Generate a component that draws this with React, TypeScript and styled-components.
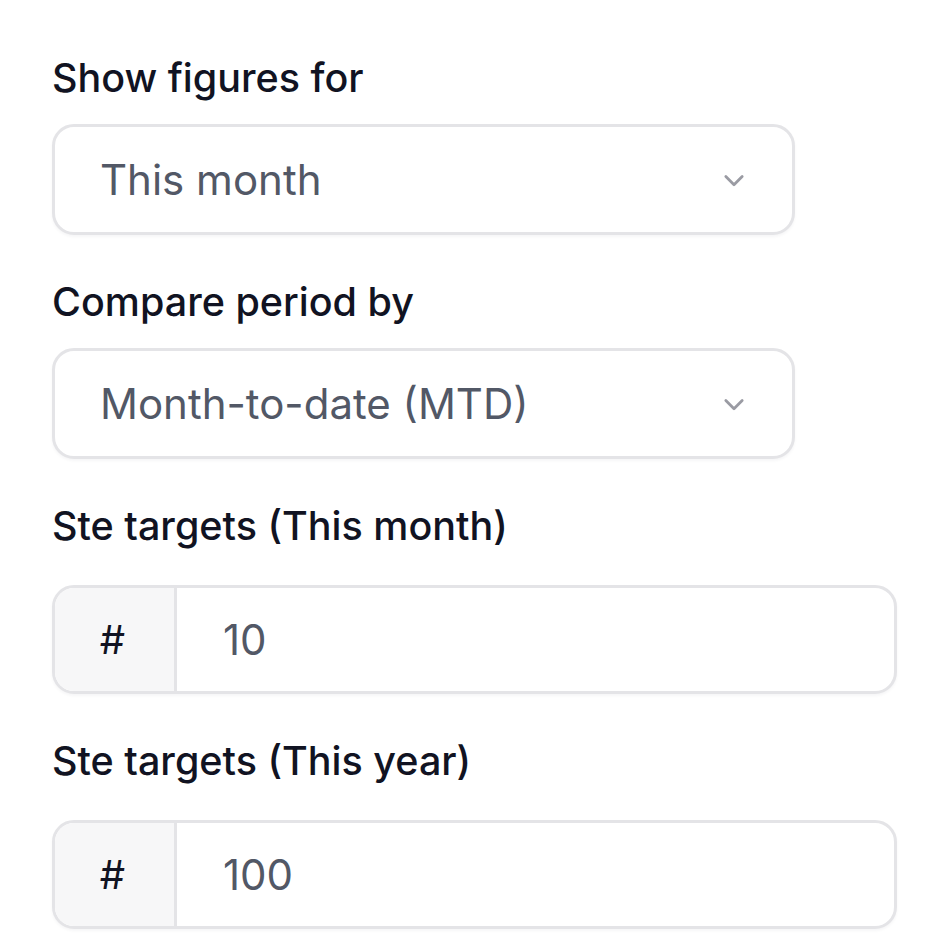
import React from 'react';
import styled, { createGlobalStyle } from 'styled-components';

const GlobalStyle = createGlobalStyle`
  html, body {
    margin: 0;
    padding: 0;
    background: #ffffff;
  }
  body {
    font-family: Inter, "Noto Sans", sans-serif;
  }
`;

const Panel = styled.div`
  display: flex;
  flex-direction: column;
  padding: 52px 47px 0 52px;
  width: 945px;
  box-sizing: border-box;
`;

const Field = styled.div<{ $gap: number }>`
  display: flex;
  flex-direction: column;
  gap: ${(p) => p.$gap}px;
  margin-bottom: 41px;
`;

const Label = styled.label`
  font-size: 39.5px;
  font-weight: 500;
  line-height: 52px;
  color: #111322;
`;

const SelectBox = styled.div`
  display: flex;
  align-items: center;
  justify-content: space-between;
  width: 743px;
  height: 111px;
  box-sizing: border-box;
  padding: 0 44px 0 45px;
  border: 3px solid #e4e4e7;
  border-radius: 22px;
  background: #fff;
  box-shadow: 0 2px 3px rgba(16, 24, 40, 0.04);
`;

const Value = styled.span`
  font-size: 42px;
  font-weight: 400;
  color: #525866;
`;

const InputGroup = styled.div`
  display: flex;
  width: 845px;
  height: 109px;
  box-sizing: border-box;
  border: 3px solid #e4e4e7;
  border-radius: 22px;
  overflow: hidden;
  background: #fff;
  box-shadow: 0 2px 3px rgba(16, 24, 40, 0.04);
`;

const Addon = styled.div`
  display: flex;
  align-items: center;
  justify-content: center;
  width: 122px;
  padding-right: 4px;
  box-sizing: border-box;
  background: #f7f7f8;
  border-right: 3px solid #e4e4e7;
  font-size: 40px;
  color: #111322;
`;

const InputValue = styled.div`
  display: flex;
  align-items: center;
  padding-left: 46px;
  flex: 1;
`;

const Chevron = () => (
  <svg width="28" height="28" viewBox="0 0 24 24" fill="none" stroke="#9a9ba3" strokeWidth="2.4" strokeLinecap="round" strokeLinejoin="round">
    <path d="M5 9l7 7 7-7" />
  </svg>
);

const Select = ({ value }: { value: string }) => (
  <SelectBox>
    <Value>{value}</Value>
    <Chevron />
  </SelectBox>
);

const NumberInput = ({ value }: { value: string }) => (
  <InputGroup>
    <Addon>#</Addon>
    <InputValue>
      <Value>{value}</Value>
    </InputValue>
  </InputGroup>
);

export default function App() {
  return (
    <>
      <GlobalStyle />
      <Panel>
        <Field $gap={20}>
          <Label>Show figures for</Label>
          <Select value="This month" />
        </Field>
        <Field $gap={20}>
          <Label>Compare period by</Label>
          <Select value="Month-to-date (MTD)" />
        </Field>
        <Field $gap={33}>
          <Label>Ste targets (This month)</Label>
          <NumberInput value="10" />
        </Field>
        <Field $gap={33}>
          <Label>Ste targets (This year)</Label>
          <NumberInput value="100" />
        </Field>
      </Panel>
    </>
  );
}
